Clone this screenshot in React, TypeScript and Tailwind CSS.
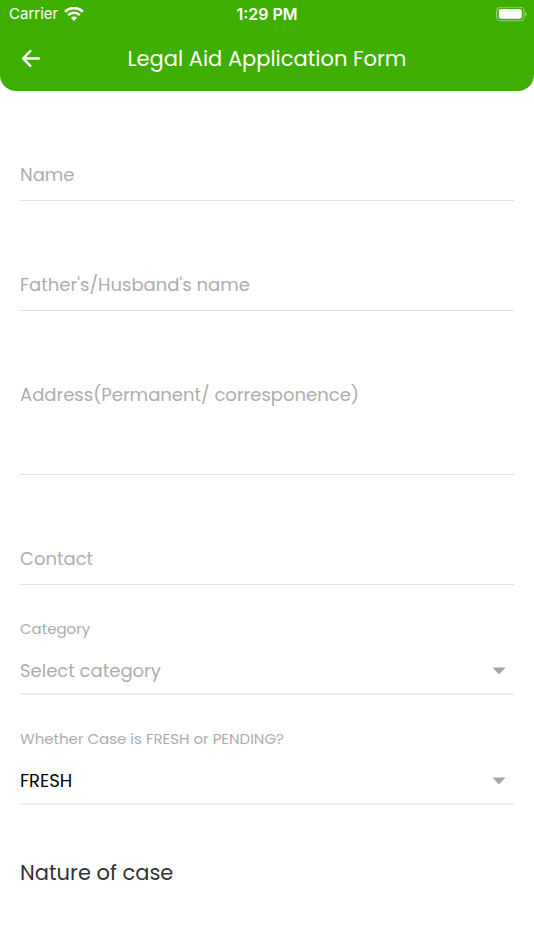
import React, { useState } from 'react';

const inputClass =
  'block w-full border-b border-[#e3e3e3] bg-transparent text-lg leading-7 text-black outline-none placeholder:text-[#adadad] placeholder:opacity-100';

const WifiIcon = () => (
  <svg width="20" height="15" viewBox="0 0 20 15" fill="none" stroke="white" aria-hidden="true">
    <path d="M1.1 4.8a12.7 12.7 0 0 1 17.8 0" strokeWidth="2.8" />
    <path d="M4.2 8.2a8.2 8.2 0 0 1 11.6 0" strokeWidth="2.6" />
    <path d="M10 13.9 6.9 10.8a4.4 4.4 0 0 1 6.2 0z" fill="white" stroke="none" />
  </svg>
);

const BatteryIcon = () => (
  <svg width="32" height="15" viewBox="0 0 32 15" fill="none" aria-hidden="true">
    <rect x="0.6" y="0.1" width="27.4" height="13.6" rx="4" stroke="white" strokeOpacity="0.45" strokeWidth="1.1" />
    <rect x="2.8" y="2.1" width="23" height="9.6" rx="2" fill="white" />
    <path d="M29.4 4.7c1.9.7 1.9 3.7 0 4.4z" fill="white" fillOpacity="0.5" />
  </svg>
);

const BackIcon = () => (
  <svg width="20" height="20" viewBox="0 0 20 20" fill="none" stroke="white" strokeWidth="2.4" strokeLinecap="round" strokeLinejoin="round" aria-hidden="true">
    <path d="M18.8 9.5H3.4M10.4 2.1 3 9.5l7.4 7.4" />
  </svg>
);

const CaretIcon = () => (
  <svg className="pointer-events-none absolute top-3 right-2" width="14" height="8" viewBox="0 0 14 8" aria-hidden="true">
    <path d="M0.5 0.5h13L7 7.5z" fill="#a6a6a6" />
  </svg>
);

interface TextFieldProps {
  id: string;
  label: string;
  type?: string;
  multiline?: boolean;
}

const TextField: React.FC<TextFieldProps> = ({ id, label, type = 'text', multiline }) => (
  <div className="pt-17">
    {multiline ? (
      <textarea id={id} aria-label={label} placeholder={label} className={`${inputClass} h-24 resize-none pt-0.5`} />
    ) : (
      <input id={id} type={type} aria-label={label} placeholder={label} className={`${inputClass} h-[42px] pb-2.5`} />
    )}
  </div>
);

interface SelectFieldProps {
  id: string;
  label: string;
  placeholder?: string;
  options: string[];
  initial?: string;
}

const SelectField: React.FC<SelectFieldProps> = ({ id, label, placeholder, options, initial = '' }) => {
  const [value, setValue] = useState(initial);

  return (
    <div className="pt-8">
      <label htmlFor={id} className="block pb-3.5 text-[15px] leading-6 text-[#adadad]">{label}</label>
      <div className="relative">
        <select
          id={id}
          value={value}
          onChange={(e) => setValue(e.target.value)}
          className={`block h-10 w-full appearance-none border-b-2 border-[#efefef] bg-transparent pb-1.5 text-lg leading-7 outline-none ${value ? 'text-black' : 'text-[#adadad]'}`}
        >
          {placeholder && <option value="">{placeholder}</option>}
          {options.map((option) => (
            <option key={option} value={option}>{option}</option>
          ))}
        </select>
        <CaretIcon />
      </div>
    </div>
  );
};

const App: React.FC = () => {
  return (
    <div className="min-h-screen bg-white font-[Poppins,Inter,sans-serif]">
      <header className="rounded-b-2xl bg-[#3eaf00] text-white">
        <div className="grid h-7 grid-cols-3 items-center px-1.5 font-[Inter,sans-serif]">
          <div className="flex items-center gap-1.5 pl-[3px] text-[15px]">
            <span>Carrier</span>
            <WifiIcon />
          </div>
          <span className="text-center text-base font-semibold">1:29 PM</span>
          <div className="flex justify-end">
            <BatteryIcon />
          </div>
        </div>
        <div className="flex items-center px-5 pt-[15px] pb-4">
          <button type="button" aria-label="Back" className="w-5">
            <BackIcon />
          </button>
          <h1 className="flex-1 pr-5 text-center text-[21px] leading-8">Legal Aid Application Form</h1>
        </div>
      </header>

      <form className="px-5 pb-14">
        <TextField id="name" label="Name" />
        <TextField id="guardian" label="Father's/Husband's name" />
        <TextField id="address" label="Address(Permanent/ corresponence)" multiline />
        <TextField id="contact" label="Contact" type="tel" />
        <SelectField
          id="category"
          label="Category"
          placeholder="Select category"
          options={['General', 'SC', 'ST', 'OBC']}
        />
        <SelectField
          id="status"
          label="Whether Case is FRESH or PENDING?"
          options={['FRESH', 'PENDING']}
          initial="FRESH"
        />
        <h2 className="pt-13 text-[21px] leading-8 text-[#333]">Nature of case</h2>
      </form>
    </div>
  );
};

export default App;
